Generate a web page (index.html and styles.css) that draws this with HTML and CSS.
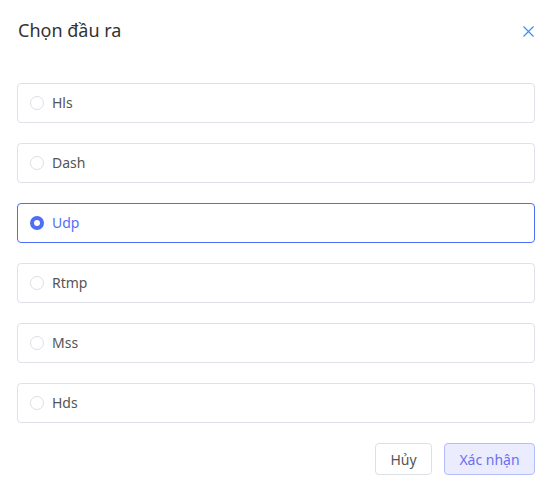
FILE: index.html
```html
<!DOCTYPE html>
<html lang="vi">
<head>
<meta charset="utf-8">
<title>Chọn đầu ra</title>
<link rel="stylesheet" href="styles.css">
</head>
<body>
<div class="modal">
  <div class="header">
    <div class="title">Chọn đầu ra</div>
    <button class="close" aria-label="Đóng">
      <svg width="11" height="11" viewBox="0 0 11 11"><path d="M0.5 0.5 L10.5 10.5 M10.5 0.5 L0.5 10.5" stroke="#3d8df5" stroke-width="1.2" fill="none"/></svg>
    </button>
  </div>
  <div class="options">
    <label class="option"><span class="radio"></span><span class="label">Hls</span></label>
    <label class="option"><span class="radio"></span><span class="label">Dash</span></label>
    <label class="option selected"><span class="radio"></span><span class="label">Udp</span></label>
    <label class="option"><span class="radio"></span><span class="label">Rtmp</span></label>
    <label class="option"><span class="radio"></span><span class="label">Mss</span></label>
    <label class="option"><span class="radio"></span><span class="label">Hds</span></label>
  </div>
  <div class="footer">
    <button class="btn cancel">Hủy</button>
    <button class="btn primary">Xác nhận</button>
  </div>
</div>
</body>
</html>
```
FILE: styles.css
```css
html, body {
  margin: 0;
  padding: 0;
  background: #ffffff;
}
body {
  font-family: "Noto Sans", "Open Sans", sans-serif;
  color: #555;
}
.modal {
  width: 553px;
  height: 481px;
  box-sizing: border-box;
  padding: 17px 18px 0 17px;
}
.header {
  display: flex;
  justify-content: space-between;
  align-items: center;
  height: 28px;
  padding-left: 1px;
}
.title {
  font-size: 18px;
  color: #333;
  line-height: 28px;
  padding-bottom: 2px;
}
.close {
  border: none;
  background: none;
  padding: 0;
  margin-right: 1px;
  width: 11px;
  height: 11px;
  display: flex;
}
.options {
  display: flex;
  flex-direction: column;
  gap: 20px;
  margin-top: 38px;
}
.option {
  display: flex;
  align-items: center;
  height: 40px;
  box-sizing: border-box;
  border: 1px solid #dfe1e8;
  border-radius: 4px;
  padding-left: 12px;
  padding-bottom: 1px;
  gap: 8px;
  font-size: 14px;
  color: #555;
}
.radio {
  width: 14px;
  height: 14px;
  border: 1px solid #dcdfe6;
  border-radius: 50%;
  box-sizing: border-box;
  flex: none;
}
.option.selected {
  border-color: #4d6ef5;
}
.option.selected .label {
  color: #5470f5;
}
.option.selected .radio {
  border: 4.5px solid #4d6ef5;
  background: #fff;
}
.footer {
  display: flex;
  justify-content: flex-end;
  gap: 12px;
  margin-top: 20px;
}
.btn {
  height: 32px;
  box-sizing: border-box;
  border: 1px solid #dcdfe6;
  border-radius: 4px;
  background: #fff;
  font-family: inherit;
  font-size: 14px;
  color: #555;
  padding: 0;
}
.btn.cancel {
  width: 57px;
}
.btn.primary {
  width: 91px;
  background: #ebedfe;
  border-color: #b3bdf9;
  color: #6b6ef3;
}
```
